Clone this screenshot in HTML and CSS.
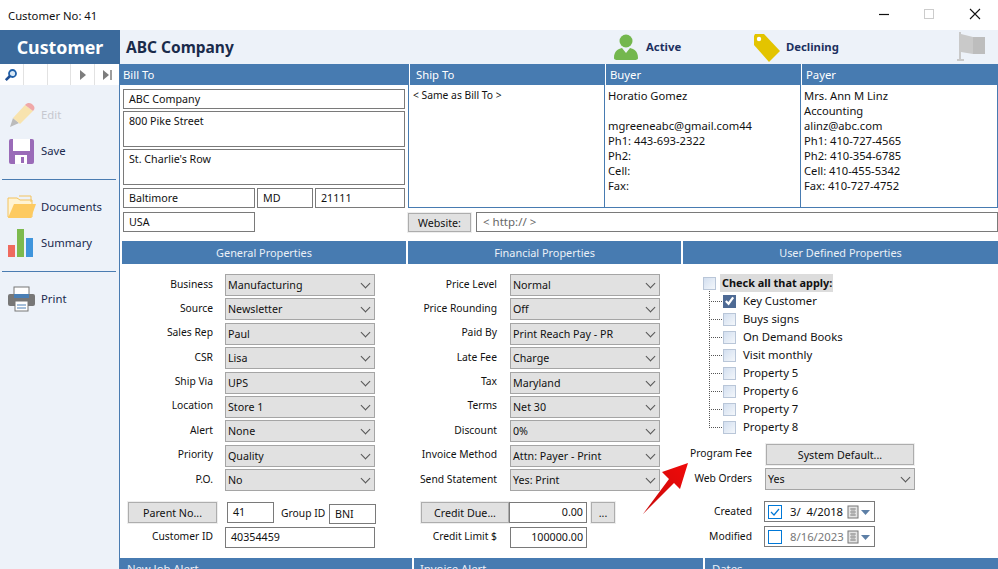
FILE: index.html
```html
<!DOCTYPE html>
<html lang="en">
<head>
<meta charset="utf-8">
<title>Customer No: 41</title>
<link rel="stylesheet" href="styles.css">
</head>
<body>
<div class="app">
  <header class="titlebar">
    <span class="title">Customer No: 41</span>
    <div class="winbtns">
      <svg class="winbtn" width="46" height="30"><path d="M19 14.500h10" stroke="#111" stroke-width="1.200"/></svg>
      <svg class="winbtn" width="46" height="30"><rect x="18.500" y="9.500" width="9" height="9" fill="none" stroke="#ccc"/></svg>
      <svg class="winbtn" width="46" height="30"><path d="M18 9l10 10M28 9l-10 10" stroke="#111" stroke-width="1.100"/></svg>
    </div>
  </header>
  <div class="body">
    <aside class="sidebar">
      <div class="brand">Customer</div>
      <div class="toolbar">
        <div class="tool">
          <svg width="14" height="14" viewBox="0 0 14 14"><circle cx="8.500" cy="5.500" r="3.500" fill="#d8e8f6" stroke="#1f5fa8" stroke-width="1.800"/><path d="M6 8L1.800 12.200" stroke="#1f4f94" stroke-width="2.600"/></svg>
        </div>
        <div class="tool"></div>
        <div class="tool"></div>
        <div class="tool"><svg width="8" height="12"><path d="M1 1l6 5-6 5z" fill="#7d7d7d"/></svg></div>
        <div class="tool"><svg width="11" height="12"><path d="M1 1l6 5-6 5z" fill="#7d7d7d"/><path d="M9 1v10" stroke="#7d7d7d" stroke-width="1.500"/></svg></div>
      </div>
      <nav class="actions">
        <div class="action disabled">
          <span class="ico"><svg width="28" height="28" viewBox="0 0 28 28"><path d="M3 26l3-9 6 5z" fill="#bbb"/><path d="M6 17L18 4l8 6-13 13z" fill="#f8e3ae"/><path d="M18 4c3-3 6-2 8 0s2 4 0 6z" fill="#f0a8a8"/></svg></span>
          <span>Edit</span>
        </div>
        <div class="action">
          <span class="ico ico-save"><svg width="25" height="25" viewBox="0 0 25 25"><rect width="25" height="25" rx="2" fill="#9a6bb8"/><rect x="4" width="17" height="12" fill="#fff"/><rect x="6" y="16" width="12" height="9" fill="#fff"/><rect x="12" y="18" width="3" height="6" fill="#9a6bb8"/></svg></span>
          <span>Save</span>
        </div>
        <hr class="rule">
        <div class="action">
          <span class="ico"><svg width="30" height="24" viewBox="0 0 30 24"><path d="M1 3h9l3 2h12v17H1z" fill="#fff3d2" stroke="#f3c35f"/><path d="M7 9h22l-5 14H1z" fill="#fdca60"/><path d="M12 1h12v6" fill="none" stroke="#f3c35f"/></svg></span>
          <span>Documents</span>
        </div>
        <div class="action">
          <span class="ico"><svg width="26" height="30" viewBox="0 0 26 30"><rect x="1" y="17" width="7" height="12" fill="#ef6a5e"/><rect x="10" y="1" width="7" height="28" fill="#7dba4e"/><rect x="19" y="10" width="7" height="19" fill="#3f95dc"/></svg></span>
          <span>Summary</span>
        </div>
        <hr class="rule">
        <div class="action">
          <span class="ico"><svg width="29" height="26" viewBox="0 0 29 26"><rect x="7" y="1" width="15" height="8" fill="#fff" stroke="#777"/><rect x="1" y="8" width="27" height="12" rx="2" fill="#777"/><rect x="7" y="8" width="15" height="4" fill="#4a7fb5"/><rect x="8" y="15" width="13" height="10" fill="#fff" stroke="#777"/><path d="M10 19h9M10 22h9" stroke="#4a7fb5"/></svg></span>
          <span>Print</span>
        </div>
      </nav>
    </aside>
    <main class="main">
      <div class="company">
        <h1 class="company-name">ABC Company</h1>
        <div class="status status-active">
          <svg width="24" height="28" viewBox="0 0 24 28"><circle cx="12" cy="8" r="6.500" fill="#74b74e"/><path d="M0 25c0-7 4-9 8-10l4 5 4-5c4 1 8 3 8 10 0 2-3 2-4 2H4c-1 0-4 0-4-2z" fill="#74b74e"/></svg>
          <span>Active</span>
        </div>
        <div class="status status-tag">
          <svg width="28" height="29" viewBox="0 0 28 29"><path d="M1 3l1-2 9 0 16 17-11 11L1 12z" fill="#e3c400"/><circle cx="6" cy="6" r="2.200" fill="#fff"/></svg>
          <span>Declining</span>
        </div>
        <svg class="flag" width="30" height="32" viewBox="0 0 30 32"><path d="M4 2v28M1 30h7" stroke="#c9c9c9" stroke-width="2"/><path d="M5 4l12 3v17L5 22z" fill="#c9c9c9"/><path d="M17 7h12v17H17z" fill="#bdbdbd"/></svg>
      </div>

      <section class="top">
        <div class="bill">
          <div class="head head-left">Bill To</div>
          <div class="bill-fields">
            <div class="field fh20">ABC Company</div>
            <div class="field fh36">800 Pike Street</div>
            <div class="field fh36">St. Charlie's Row</div>
            <div class="city">
              <div class="field fh20 w132">Baltimore</div>
              <div class="field fh20 w56">MD</div>
              <div class="field fh20 w90">21111</div>
            </div>
            <div class="field fh20 w132 country">USA</div>
          </div>
        </div>
        <div class="contacts">
          <div class="contact-grid">
            <div class="contact c1"><div class="head head-left">Ship To</div><div class="contact-text">&lt; Same as Bill To &gt;</div></div>
            <div class="contact c2"><div class="head head-buyer">Buyer</div><div class="contact-text">Horatio Gomez<br><br>mgreeneabc@gmail.com44<br>Ph1: 443-693-2322<br>Ph2:<br>Cell:<br>Fax:</div></div>
            <div class="contact c3"><div class="head head-buyer">Payer</div><div class="contact-text">Mrs. Ann M Linz<br>Accounting<br>alinz@abc.com<br>Ph1: 410-727-4565<br>Ph2: 410-354-6785<br>Cell: 410-455-5342<br>Fax: 410-727-4752</div></div>
          </div>
          <div class="website">
            <div class="btn btn-web">Website:</div>
            <div class="field fh20 url">&lt; http:// &gt;</div>
          </div>
        </div>
      </section>

      <section class="props">
        <div class="panel">
          <div class="phead">General Properties</div>
          <div class="form form-gen">
            <label>Business</label><div class="select">Manufacturing</div>
            <label>Source</label><div class="select">Newsletter</div>
            <label>Sales Rep</label><div class="select">Paul</div>
            <label>CSR</label><div class="select">Lisa</div>
            <label>Ship Via</label><div class="select">UPS</div>
            <label>Location</label><div class="select">Store 1</div>
            <label>Alert</label><div class="select">None</div>
            <label>Priority</label><div class="select">Quality</div>
            <label>P.O.</label><div class="select">No</div>
          </div>
          <div class="inline inline-gen">
            <div class="btn btn-parent">Parent No...</div>
            <div class="field fh21 w47 mid">41</div>
            <span class="group-label">Group ID</span>
            <div class="field fh20 w47 low">BNI</div>
          </div>
          <div class="form form-gen last">
            <label>Customer ID</label><div class="field fh21 w150">40354459</div>
          </div>
        </div>
        <div class="panel">
          <div class="phead">Financial Properties</div>
          <div class="form form-fin">
            <label>Price Level</label><div class="select">Normal</div>
            <label>Price Rounding</label><div class="select">Off</div>
            <label>Paid By</label><div class="select">Print Reach Pay - PR</div>
            <label>Late Fee</label><div class="select">Charge</div>
            <label>Tax</label><div class="select">Maryland</div>
            <label>Terms</label><div class="select">Net 30</div>
            <label>Discount</label><div class="select">0%</div>
            <label>Invoice Method</label><div class="select">Attn: Payer - Print</div>
            <label>Send Statement</label><div class="select">Yes: Print</div>
          </div>
          <div class="inline inline-fin">
            <div class="btn btn-credit">Credit Due...</div>
            <div class="field fh21 w78 num">0.00</div>
            <div class="btn btn-dots">...</div>
          </div>
          <div class="form form-fin last">
            <label>Credit Limit $</label><div class="field fh21 w77 num">100000.00</div>
          </div>
        </div>
        <div class="panel">
          <div class="phead">User Defined Properties</div>
          <div class="tree">
            <div class="tree-root"><span class="chk"></span><span class="root-label">Check all that apply:</span></div>
            <ul class="tree-items">
              <li><span class="chk on"><svg width="12" height="12" viewBox="0 0 12 12"><path d="M2 6l3 3 5-7" fill="none" stroke="#fff" stroke-width="2.400"/></svg></span>Key Customer</li>
              <li><span class="chk"></span>Buys signs</li>
              <li><span class="chk"></span>On Demand Books</li>
              <li><span class="chk"></span>Visit monthly</li>
              <li><span class="chk"></span>Property 5</li>
              <li><span class="chk"></span>Property 6</li>
              <li><span class="chk"></span>Property 7</li>
              <li><span class="chk"></span>Property 8</li>
            </ul>
          </div>
          <div class="form form-udp">
            <label>Program Fee</label><div class="btn btn-sys">System Default...</div>
            <label>Web Orders</label><div class="select">Yes</div>
          </div>
          <div class="form form-date">
            <label>Created</label>
            <div class="date"><span class="dchk"><svg width="12" height="12" viewBox="0 0 12 12"><path d="M2 6l3 3 5-6" fill="none" stroke="#0078d7" stroke-width="1.200"/></svg></span><span class="dval">3/&nbsp; 4/2018</span><svg class="cal" width="25" height="14" viewBox="0 0 25 14"><rect x="1" y="1" width="10" height="12" fill="#e4e4e4" stroke="#777"/><path d="M3 4h6M3 7h6M3 10h6M5 3v8M7 3v8" stroke="#999"/><path d="M14 5h9l-4.500 5z" fill="#5d7fa6"/></svg></div>
            <label>Modified</label>
            <div class="date"><span class="dchk"></span><span class="dval grey">8/16/2023</span><svg class="cal" width="25" height="14" viewBox="0 0 25 14"><rect x="1" y="1" width="10" height="12" fill="#e4e4e4" stroke="#777"/><path d="M3 4h6M3 7h6M3 10h6M5 3v8M7 3v8" stroke="#999"/><path d="M14 5h9l-4.500 5z" fill="#5d7fa6"/></svg></div>
          </div>
        </div>
      </section>

      <section class="alerts">
        <div class="ahead a1">New Job Alert</div>
        <div class="ahead a2">Invoice Alert</div>
        <div class="ahead a3">Dates</div>
      </section>
    </main>
  </div>
  <svg class="arrow" width="50" height="54" viewBox="0 0 50 54">
    <defs><linearGradient id="red" x1="0" y1="1" x2="1" y2="0"><stop offset="0" stop-color="#c80a0a"/><stop offset="1" stop-color="#f00a0a"/></linearGradient></defs>
    <path d="M1 52L27 17 20 10 46 1 38 27 32 21z" fill="url(#red)"/>
  </svg>
</div>
</body>
</html>
```

FILE: styles.css
```css
* { box-sizing: border-box; }
html, body { margin: 0; padding: 0; height: 569px; overflow: hidden; background: #fff; }
body { font-family: "Noto Sans", "Open Sans", sans-serif; font-size: 10.700px; color: #111; }
.app { position: relative; width: 998px; height: 569px; overflow: hidden; }

.titlebar { height: 30px; display: flex; align-items: center; justify-content: space-between; padding-left: 8px; font-size: 11.300px; }
.winbtns { display: flex; }
.winbtn { display: block; }

.body { display: flex; height: 539px; }
.sidebar { width: 120px; flex: none; background: #edf2f9; border-right: 1px solid #4a7cb1; }
.brand { height: 34px; margin-right: -1px; background: #3b6a9c; color: #fff; font-size: 17.800px; font-weight: 700; display: flex; align-items: center; justify-content: center; }
.toolbar { height: 21px; display: flex; background: #fff; }
.tool { width: 24px; display: flex; align-items: center; justify-content: center; border-right: 1px solid #e2e2e2; }
.tool:last-child { border-right: 0; }
.actions { padding-top: 12px; }
.action { height: 36px; display: flex; align-items: center; padding-left: 7px; color: #1b2a4e; font-size: 11.300px; line-height: 16px; }
.ico { width: 34px; flex: none; display: flex; align-items: center; }
.ico svg { display: block; }
.ico-save { padding-left: 2px; }
.action.disabled { color: #c6c8cf; }
.rule { margin: 10px 3px 9px 2px; border: 0; border-top: 1px solid #4a7cb1; height: 0; }

.main { flex: 1; min-width: 0; }
.company { height: 34px; background: #edf2f9; display: flex; align-items: center; padding-left: 6px; }
.company-name { margin: 0; font-size: 15.500px; font-weight: 700; color: #1a2b4b; width: 488px; }
.status { display: flex; align-items: center; font-size: 11.300px; font-weight: 700; color: #1c3060; }
.status span { margin-top: -2px; }
.status-active { width: 139px; gap: 8px; }
.status-tag { width: 205px; gap: 5px; }
.flag { display: block; margin-top: -2px; margin-left: -2px; }

.head { height: 21px; background: #477bb1; color: #fff; font-size: 11.300px; line-height: 21px; }
.head-left { padding-left: 3px; }
.head-buyer { padding-left: 4px; }

.top { display: flex; height: 177px; }
.bill { width: 288px; flex: none; }
.bill-fields { padding: 4px 3px 0; display: flex; flex-direction: column; }
.field { border: 1px solid #7a7a7a; background: #fff; padding: 0 5px; color: #111; line-height: 18px; }
.fh20 { height: 20px; }
.fh21 { height: 21px; line-height: 18px; }
.fh36 { height: 36px; margin-top: 2px; }
.w132 { width: 132px; }
.w56 { width: 56px; }
.w90 { width: 90px; }
.w47 { width: 47px; }
.w78 { width: 78px; }
.w77 { width: 77px; }
.w150 { width: 150px; }
.city { display: flex; gap: 2px; margin-top: 3px; }
.country { margin-top: 4px; }

.contacts { flex: 1; min-width: 0; }
.contact-grid { display: grid; grid-template-columns: 195px 196px 1fr; height: 144px; border: 1px solid #477bb1; border-top: 0; }
.contact { min-width: 0; border-left: 1px solid #477bb1; }
.contact.c1 { border-left: 0; }
.contact .head { margin-left: 1px; }
.c1 .head-left { padding-left: 6px; }
.contact-text { padding: 3px 0 0 3px; line-height: 15px; font-size: 11.200px; }
.c1 .contact-text { padding-left: 4px; font-size: 10.300px; }
.website { display: flex; gap: 5px; margin-top: 4px; }
.url { flex: 1; color: #666; padding-left: 6px; font-size: 11.500px; }

.btn { background: #e1e1e1; border: 1px solid #adadad; outline: 1px solid #eee; display: flex; align-items: center; justify-content: center; color: #111; }
.btn-web { width: 63px; height: 19px; margin-top: 1px; }

.props { display: grid; grid-template-columns: 284px 273px 315px; gap: 2px; padding-left: 2px; height: 317px; }
.phead { height: 23px; background: #477bb1; color: #eaf0f7; font-size: 10.900px; line-height: 23px; text-align: center; }

.form { display: grid; column-gap: 12px; row-gap: 2.400px; align-items: center; }
.form label { text-align: right; line-height: 16px; margin-top: -3px; white-space: nowrap; font-size: 10.300px; }
.form-gen { grid-template-columns: 91px 150px; padding-top: 10px; }
.form-fin { grid-template-columns: 89px 150px; column-gap: 13px; padding-top: 10px; }
.form.last { padding-top: 4px; }
.select { height: 22px; background: #e1e1e1; border: 1px solid #a5a5a5; padding-left: 2px; line-height: 20px; position: relative; color: #111; }
.select::after { content: ""; position: absolute; right: 5px; top: 5px; width: 6px; height: 6px; border-right: 1px solid #555; border-bottom: 1px solid #555; transform: rotate(45deg); }

.inline { display: flex; align-items: flex-start; height: 21px; margin-top: 11px; }
.inline-gen { padding-left: 6px; }
.btn-parent { width: 89px; height: 21px; }
.mid { margin-left: 10px; }
.group-label { margin-left: 7px; line-height: 18px; margin-top: 2px; width: 48px; white-space: nowrap; font-size: 10.300px; }
.low { margin-top: 2px; }
.inline-fin { padding-left: 13px; }
.btn-credit { width: 88px; height: 21px; }
.num { text-align: right; padding-right: 3px; }
.btn-dots { width: 24px; height: 21px; margin-left: 4px; }

.tree { height: 180px; padding: 10px 0 0 20px; }
.tree-root { height: 18px; display: flex; align-items: center; }
.chk { display: inline-flex; width: 13px; height: 13px; flex: none; border: 1px solid #b9c6d8; background: linear-gradient(135deg, #d3dff0, #f4f7fb); align-items: center; justify-content: center; }
.chk.on { background: #4e6a94; border-color: #4e6a94; }
.root-label { margin-left: 4px; background: #dcdcdc; font-weight: 700; font-size: 10.900px; padding: 0 2px; line-height: 18px; width: 113px; white-space: nowrap; }
.tree-items { list-style: none; margin: 0; padding: 0 0 0 20px; font-size: 11.300px; }
.tree-items li { height: 18px; display: flex; align-items: center; gap: 7px; position: relative; line-height: 16px; }
.tree-items li::before { content: ""; position: absolute; left: -14px; top: -9px; width: 12px; height: 18px; border-left: 1px dotted #555; border-bottom: 1px dotted #555; }
.tree-items li:first-child::before { top: -1px; height: 10px; }

.form-udp { grid-template-columns: 69px 150px; column-gap: 13px; row-gap: 3px; }
.btn-sys { width: 148px; height: 21px; margin-left: 1px; }
.form-date { grid-template-columns: 69px 111px; column-gap: 12px; row-gap: 4px; padding-top: 11px; font-size: 11.300px; }
.form-date label { margin-top: -1px; }
.date { height: 21px; border: 1px solid #7a7a7a; background: #fff; display: flex; align-items: center; padding-left: 3px; }
.dchk { width: 14px; height: 14px; border: 1px solid #0078d7; display: flex; align-items: center; justify-content: center; flex: none; }
.dval { margin-left: 8px; white-space: nowrap; width: 57px; flex: none; }
.dval.grey { color: #777; }
.cal { flex: none; }

.alerts { display: grid; grid-template-columns: 292px 289px 1fr; gap: 2px; height: 11px; overflow: hidden; }
.ahead { background: #477bb1; color: #eaf0f7; font-size: 11.300px; line-height: 21px; height: 11px; padding-left: 7px; overflow: hidden; }
.a2 { padding-left: 6px; }

.arrow { position: absolute; left: 642px; top: 462px; }
```
